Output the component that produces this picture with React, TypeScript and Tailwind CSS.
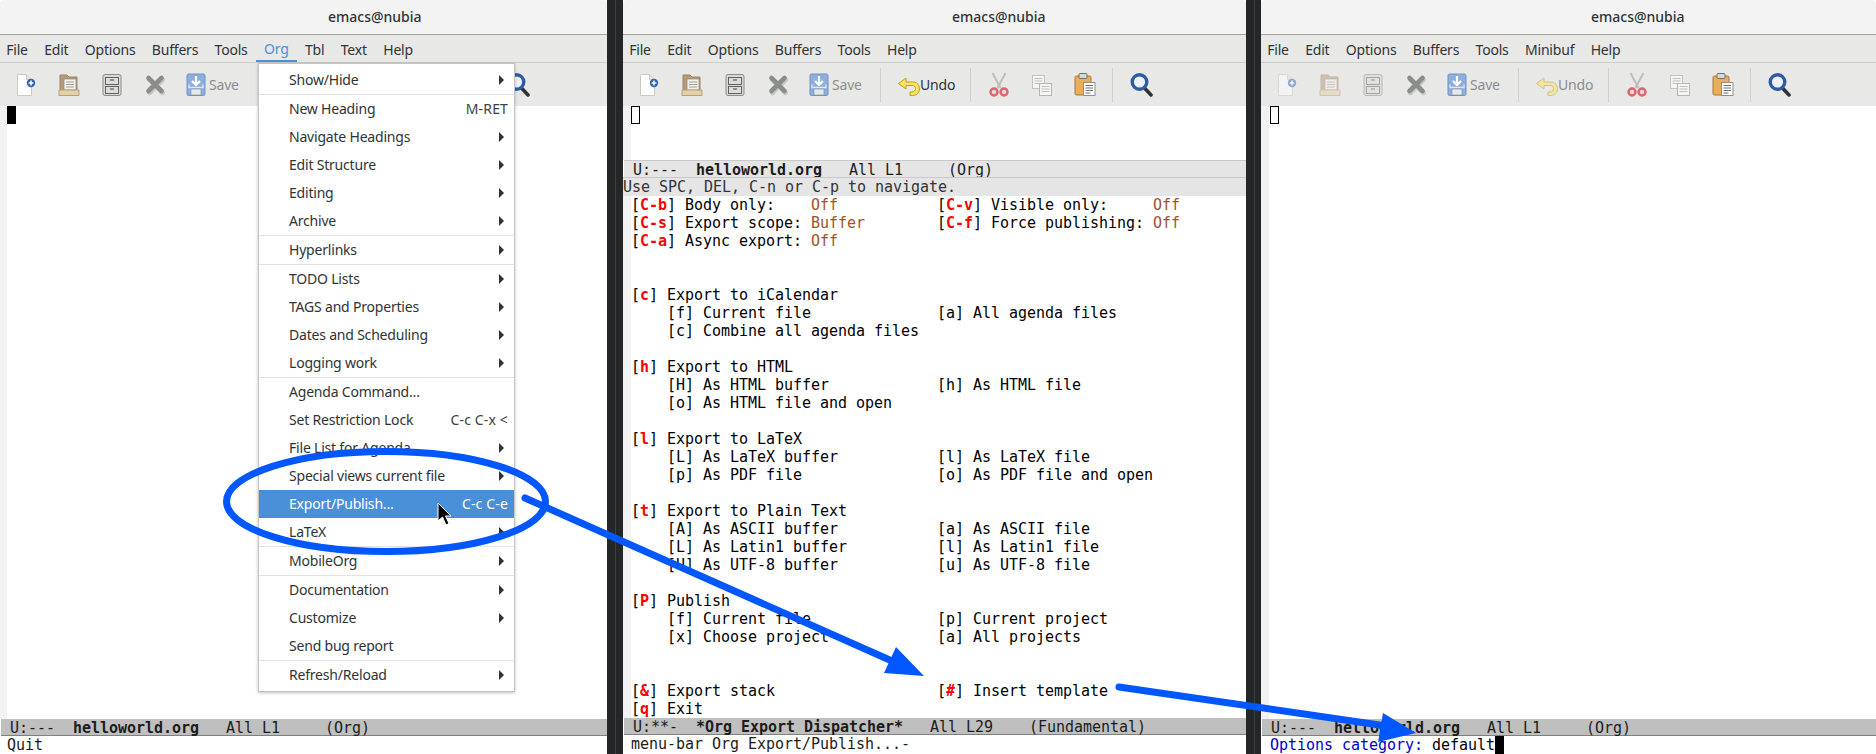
import React from "react";

const uiFont = "font-['Noto_Sans',sans-serif]";

// lines of the export dispatcher: {x} is a red key, <x> a sienna value
const dispatcher = [
  "[{C-b}] Body only:    <Off>           [{C-v}] Visible only:     <Off>",
  "[{C-s}] Export scope: <Buffer>        [{C-f}] Force publishing: <Off>",
  "[{C-a}] Async export: <Off>",
  "",
  "",
  "[{c}] Export to iCalendar",
  "    [f] Current file              [a] All agenda files",
  "    [c] Combine all agenda files",
  "",
  "[{h}] Export to HTML",
  "    [H] As HTML buffer            [h] As HTML file",
  "    [o] As HTML file and open",
  "",
  "[{l}] Export to LaTeX",
  "    [L] As LaTeX buffer           [l] As LaTeX file",
  "    [p] As PDF file               [o] As PDF file and open",
  "",
  "[{t}] Export to Plain Text",
  "    [A] As ASCII buffer           [a] As ASCII file",
  "    [L] As Latin1 buffer          [l] As Latin1 file",
  "    [U] As UTF-8 buffer           [u] As UTF-8 file",
  "",
  "[{P}] Publish",
  "    [f] Current file              [p] Current project",
  "    [x] Choose project            [a] All projects",
  "",
  "",
  "[{&}] Export stack                  [{#}] Insert template",
  "[{q}] Exit",
];

type MenuRow = { label: string; arrow?: boolean; keys?: string; active?: boolean } | "sep";

const orgMenu: MenuRow[] = [
  { label: "Show/Hide", arrow: true },
  "sep",
  { label: "New Heading", keys: "M-RET" },
  { label: "Navigate Headings", arrow: true },
  { label: "Edit Structure", arrow: true },
  { label: "Editing", arrow: true },
  { label: "Archive", arrow: true },
  "sep",
  { label: "Hyperlinks", arrow: true },
  "sep",
  { label: "TODO Lists", arrow: true },
  { label: "TAGS and Properties", arrow: true },
  { label: "Dates and Scheduling", arrow: true },
  { label: "Logging work", arrow: true },
  "sep",
  { label: "Agenda Command..." },
  { label: "Set Restriction Lock", keys: "C-c C-x <" },
  { label: "File List for Agenda", arrow: true },
  { label: "Special views current file", arrow: true },
  { label: "Export/Publish...", keys: "C-c C-e", active: true },
  { label: "LaTeX", arrow: true },
  "sep",
  { label: "MobileOrg", arrow: true },
  "sep",
  { label: "Documentation", arrow: true },
  { label: "Customize", arrow: true },
  { label: "Send bug report" },
  "sep",
  { label: "Refresh/Reload", arrow: true },
];

function DispatcherLine({ text }: { text: string }) {
  const parts = text.split(/(\{[^}]+\}|<[^>]+>)/);
  return (
    <div className="h-[18px]">
      {parts.map((p, i) => {
        if (p.startsWith("{")) return <span key={i} className="font-bold text-[#ff0000]">{p.slice(1, -1)}</span>;
        if (p.startsWith("<")) return <span key={i} className="text-[#a0522d]">{p.slice(1, -1)}</span>;
        return <span key={i}>{p}</span>;
      })}
    </div>
  );
}

function NewIcon() {
  return (
    <svg className="-ml-[2px]" width="22" height="24" viewBox="0 0 22 24">
      <path d="M3.5 1.500h9l5 5v16h-14z" fill="#fff" stroke="#c9c9c6" />
      <path d="M12.500 1.500v5h5" fill="#e4e4e2" stroke="#c9c9c6" />
      <circle cx="17" cy="10" r="4.200" fill="#2f63b0" />
      <path d="M17 7.600v4.800M14.600 10h4.800" stroke="#fff" strokeWidth="1.500" />
    </svg>
  );
}

function FolderIcon() {
  return (
    <svg width="22" height="24" viewBox="0 0 22 24">
      <path d="M2 2h7l2 2h8v18H2z" fill="#b39a78" stroke="#9c8565" />
      <rect x="6" y="6" width="12" height="11" fill="#f2f0ea" stroke="#8f8a80" strokeWidth=".7" />
      <path d="M8 9h8M8 11.500h8M8 14h8" stroke="#8a8a86" strokeWidth=".8" />
      <path d="M1 17h20v5.500H1z" fill="#e5cfa8" stroke="#b79f7a" />
    </svg>
  );
}

function CabinetIcon() {
  return (
    <svg width="22" height="24" viewBox="0 0 22 24">
      <rect x="2" y="1.500" width="18" height="21" rx="2" fill="#d8d8d5" stroke="#8c8c8a" />
      <rect x="4.500" y="4.500" width="13" height="7" fill="#dcdcd9" stroke="#555753" strokeWidth=".9" />
      <rect x="4.500" y="13.500" width="13" height="7" fill="#dcdcd9" stroke="#555753" strokeWidth=".9" />
      <path d="M9 7h4M9 16h4" stroke="#3f4240" strokeWidth="1.200" />
    </svg>
  );
}

function CloseIcon() {
  return (
    <svg width="22" height="24" viewBox="0 0 22 24">
      <path d="M5 5.500l13 13M18 5.500l-13 13" stroke="#c8c8c5" strokeWidth="5" strokeLinecap="round" transform="translate(.5 1.200)" />
      <path d="M4.500 5l13 13M17.500 5l-13 13" stroke="#8b8d8a" strokeWidth="4.600" strokeLinecap="round" />
    </svg>
  );
}

function SaveIcon() {
  return (
    <svg width="20" height="24" viewBox="0 0 20 24">
      <rect x="1" y="1" width="18" height="21.500" rx="1.500" fill="#8eaedd" stroke="#6f93c8" />
      <path d="M10 3v8.500M6 8l4 4 4-4" fill="none" stroke="#fff" strokeWidth="2.200" />
      <path d="M3 11.500v3h14v-3" fill="none" stroke="#dfe8f6" strokeWidth="1.300" />
      <rect x="5" y="16" width="10" height="6" fill="#e6e8ea" stroke="#7d8a9c" strokeWidth=".6" />
    </svg>
  );
}

function UndoIcon() {
  return (
    <svg width="23" height="24" viewBox="0 0 23 24">
      <path d="M9 5 1.500 10.500 9 16v-3.500h6c2.500 0 3.500 1.500 3.500 3.200s-1.200 3.300-3.500 3.300h-2v3.500h2.500c4.500 0 7-3 7-6.800 0-4-3-6.700-6.800-6.700H9z" fill="#f7e36b" stroke="#c4a000" strokeLinejoin="round" />
    </svg>
  );
}

function ScissorsIcon() {
  return (
    <svg width="20" height="26" viewBox="0 0 20 26">
      <path d="M3.500 1 11.500 16M16.500 1 8.500 16" stroke="#bdbdba" strokeWidth="2" fill="none" />
      <circle cx="5" cy="20" r="3.500" fill="#f0d7d7" stroke="#d9656d" strokeWidth="2.400" />
      <circle cx="15" cy="20" r="3.500" fill="#f0d7d7" stroke="#d9656d" strokeWidth="2.400" />
    </svg>
  );
}

function CopyIcon() {
  return (
    <svg width="22" height="24" viewBox="0 0 22 24">
      <rect x="1.500" y="2.500" width="12" height="13" fill="#f5f5f3" stroke="#c2c2bf" />
      <path d="M3.500 5.500h8M3.500 8h8M3.500 10.500h8" stroke="#bfbfbc" />
      <rect x="8.500" y="10.500" width="12" height="12" fill="#f5f5f3" stroke="#b5b5b2" />
      <path d="M10.500 13.500h8M10.500 16h8M10.500 18.500h8" stroke="#bfbfbc" />
    </svg>
  );
}

function PasteIcon() {
  return (
    <svg width="22" height="25" viewBox="0 0 22 25">
      <rect x="1" y="4" width="16" height="19" rx="1.500" fill="#e8ae5c" stroke="#a9752f" />
      <rect x="5" y="1.500" width="8" height="5" rx="1" fill="#d8d8d5" stroke="#6f716e" />
      <rect x="9.500" y="10.500" width="11.500" height="13" fill="#fff" stroke="#8f918e" />
      <path d="M11.500 13.500h7.500M11.500 16h7.500M11.500 18.500h7.500M11.500 21h5" stroke="#6f716e" />
    </svg>
  );
}

function SearchIcon() {
  return (
    <svg width="23" height="25" viewBox="0 0 23 25">
      <path d="m14.500 16 6.500 7" stroke="#2e3436" strokeWidth="3.500" strokeLinecap="round" />
      <circle cx="9.500" cy="10" r="7.300" fill="#eef2f7" stroke="#2f5aa8" strokeWidth="3.400" />
    </svg>
  );
}

function ToolButton({ children }: { children: React.ReactNode }) {
  return <div className="flex w-[43px] justify-center">{children}</div>;
}

function Sep() {
  return <div className="mx-[6px] h-[34px] w-px bg-[#cfcfcd]" />;
}

function Toolbar({ dimFile, undoOn, covered }: { dimFile?: boolean; undoOn?: boolean; covered?: boolean }) {
  const fileDim = dimFile ? "opacity-50" : "";
  return (
    <div className="flex h-[43px] items-center bg-[#e8e8e7] pl-[4px]">
      <div className={`flex ${fileDim}`}>
        <ToolButton><NewIcon /></ToolButton>
        <ToolButton><FolderIcon /></ToolButton>
        <ToolButton><CabinetIcon /></ToolButton>
      </div>
      <ToolButton><CloseIcon /></ToolButton>
      <div className="flex w-[75px] items-center gap-[3px] pl-[10px] text-[14px] tracking-[-0.2px] text-[#8b8e8f]">
        <SaveIcon />
        <span>Save</span>
      </div>
      {/* the open Org menu hides this stretch of the left frame's toolbar */}
      {covered ? (
        <div className="w-[246px]" />
      ) : (
        <>
          <Sep />
          <div className={`flex w-[77px] items-center pl-[10px] text-[14px] tracking-[-0.2px] ${undoOn ? "text-[#2e3436]" : "text-[#8b8e8f]"}`}>
            <span className={undoOn ? "" : "opacity-50"}><UndoIcon /></span>
            <span>Undo</span>
          </div>
          <Sep />
          <ToolButton><ScissorsIcon /></ToolButton>
          <ToolButton><CopyIcon /></ToolButton>
          <ToolButton><PasteIcon /></ToolButton>
          <Sep />
          <div className="w-px" />
        </>
      )}
      <ToolButton><SearchIcon /></ToolButton>
    </div>
  );
}

function MenuBar({ items, active }: { items: string[]; active?: string }) {
  return (
    <div className="flex h-[28px] items-stretch border-b border-[#cdcdcb] bg-[#e8e8e7] text-[14px] tracking-[-0.2px] text-[#2e3436]">
      {items.map((m) => (
        <div
          key={m}
          className={`flex items-center px-[8.2px] pt-[2px] first:-ml-[2px] ${m === active ? "border-b-2 border-[#4a90d9] text-[#4a90d9]" : ""}`}
        >
          {m}
        </div>
      ))}
    </div>
  );
}

function TitleBar({ pad }: { pad: string }) {
  return (
    <div className={`flex h-[35px] shrink-0 items-center rounded-t-[4px] border-b border-[#a3a3a1] bg-[#f3f3f3] pb-[2px] text-[14px] font-medium text-[#2e3436] ${pad}`}>
      emacs@nubia
    </div>
  );
}

function ModeLine({ left, name, right, dim }: { left: string; name: string; right: string; dim?: boolean }) {
  return (
    <div className={`ml-px h-[17px] shrink-0 whitespace-pre pl-[9px] leading-[18px] text-[#1c1c1c] ${dim ? "border-t border-[#c8c8c8] bg-[#e5e5e5] leading-[16px]" : "border-b border-[#7f7f7f] bg-[#bfbfbf]"}`}>
      {left}
      <span className="font-bold">{name}</span>
      {right}
    </div>
  );
}

function Blank({ className }: { className: string }) {
  return <span className={`inline-block h-[18px] w-[9px] align-top ${className}`} />;
}

function OrgMenu() {
  return (
    <div className={`absolute left-[258px] top-[63px] w-[257px] border border-[#c4c4c2] bg-white py-[2px] text-[14px] tracking-[-0.2px] text-[#2e3436] shadow-[0_1px_3px_rgba(0,0,0,0.25)] ${uiFont}`}>
      {orgMenu.map((row, i) =>
        row === "sep" ? (
          <div key={i} className="h-px bg-[#e3e3e1]" />
        ) : (
          <div
            key={i}
            className={`flex h-[28px] items-center justify-between pb-px pl-[30px] pr-[6px] ${row.active ? "bg-[#4a90d9] text-white" : ""}`}
          >
            <span>{row.label}</span>
            {row.keys && <span className={`tracking-[0.15px] ${row.active ? "text-white" : "text-[#3c4144]"}`}>{row.keys}</span>}
            {row.arrow && <span className="mr-[4px] mt-px h-0 w-0 border-y-[5px] border-l-[5px] border-y-transparent border-l-[#2e3436]" />}
          </div>
        ),
      )}
    </div>
  );
}

function Annotations() {
  const blue = "#0057ff";
  return (
    <svg className="pointer-events-none absolute left-0 top-0" width="1876" height="754" viewBox="0 0 1876 754">
      <path d="M438 503 438 521 442.500 517 446 525 449 523.500 445.500 516 451 516z" fill="#000" stroke="#fff" strokeWidth="1" />
      <ellipse cx="386" cy="501.500" rx="159.500" ry="50" fill="none" stroke={blue} strokeWidth="7" />
      <path d="M525 498 892 661" fill="none" stroke={blue} strokeWidth="7" strokeLinecap="round" />
      <path d="M896 647 924 676 884 673z" fill={blue} />
      <path d="M1119 687 1400 728" fill="none" stroke={blue} strokeWidth="7" strokeLinecap="round" />
      <path d="M1383 713 1416 733 1378 742z" fill={blue} />
    </svg>
  );
}

const monoText = "font-['DejaVu_Sans_Mono',monospace] text-[15px] leading-[18px] tracking-[-0.03px]";

export default function App() {
  return (
    <div className="relative flex h-[754px] w-[1876px] overflow-hidden bg-[#232727]">
      {/* left frame */}
      <div className="flex w-[607px] shrink-0 flex-col bg-white">
        <div className={`${uiFont} flex flex-col`}>
          <TitleBar pad="pl-[328px]" />
          <MenuBar items={["File", "Edit", "Options", "Buffers", "Tools", "Org", "Tbl", "Text", "Help"]} active="Org" />
          <Toolbar covered />
        </div>
        <div className={`flex flex-1 flex-col ${monoText}`}>
          <div className="flex-1 border-l-[7px] border-[#f2f2f2] bg-white">
            <Blank className="bg-black" />
          </div>
          <ModeLine left="U:---  " name="helloworld.org" right="   All L1     (Org)" />
          <div className="h-[18px] whitespace-pre pl-[7px] text-[#1c1c1c]">Quit</div>
        </div>
      </div>
      <div className="w-[16px] shrink-0 pl-[8px]">
        <div className="h-full w-px bg-[#3c4040]" />
      </div>

      {/* middle frame */}
      <div className="flex w-[623px] shrink-0 flex-col bg-white">
        <div className={`${uiFont} flex flex-col`}>
          <TitleBar pad="pl-[329px]" />
          <MenuBar items={["File", "Edit", "Options", "Buffers", "Tools", "Help"]} />
          <Toolbar undoOn />
        </div>
        <div className={`flex flex-1 flex-col ${monoText}`}>
          <div className="h-[54px] border-l-[8px] border-[#f2f2f2] bg-white">
            <Blank className="border border-black" />
          </div>
          <ModeLine left="U:---  " name="helloworld.org" right="   All L1     (Org)" dim />
          <div className="h-[19px] border-t border-[#c8c8c8] bg-[#e5e5e5] whitespace-pre text-[#333]">Use SPC, DEL, C-n or C-p to navigate.</div>
          <div className="h-[522px] whitespace-pre border-l-[8px] border-[#f2f2f2] text-black">
            {dispatcher.map((l, i) => (
              <DispatcherLine key={i} text={l} />
            ))}
          </div>
          <ModeLine left="U:**-  " name="*Org Export Dispatcher*" right="   All L29    (Fundamental)" />
          <div className="h-[18px] whitespace-pre pl-[8px] text-[#1c1c1c]">menu-bar Org Export/Publish...-</div>
        </div>
      </div>
      <div className="w-[15px] shrink-0 pl-[8px]">
        <div className="h-full w-px bg-[#3c4040]" />
      </div>

      {/* right frame */}
      <div className="flex min-w-0 flex-1 flex-col bg-white">
        <div className={`${uiFont} flex flex-col`}>
          <TitleBar pad="pl-[330px]" />
          <MenuBar items={["File", "Edit", "Options", "Buffers", "Tools", "Minibuf", "Help"]} />
          <Toolbar dimFile />
        </div>
        <div className={`flex flex-1 flex-col ${monoText}`}>
          <div className="flex-1 border-l-[8px] border-[#f2f2f2] bg-white pl-px">
            <Blank className="border border-black" />
          </div>
          <ModeLine left="U:---  " name="helloworld.org" right="   All L1     (Org)" />
          <div className="h-[18px] whitespace-pre pl-[9px] text-black">
            <span className="text-[#0000cd]">Options category: </span>default
            <Blank className="bg-black" />
          </div>
        </div>
      </div>

      <OrgMenu />
      <Annotations />
    </div>
  );
}
